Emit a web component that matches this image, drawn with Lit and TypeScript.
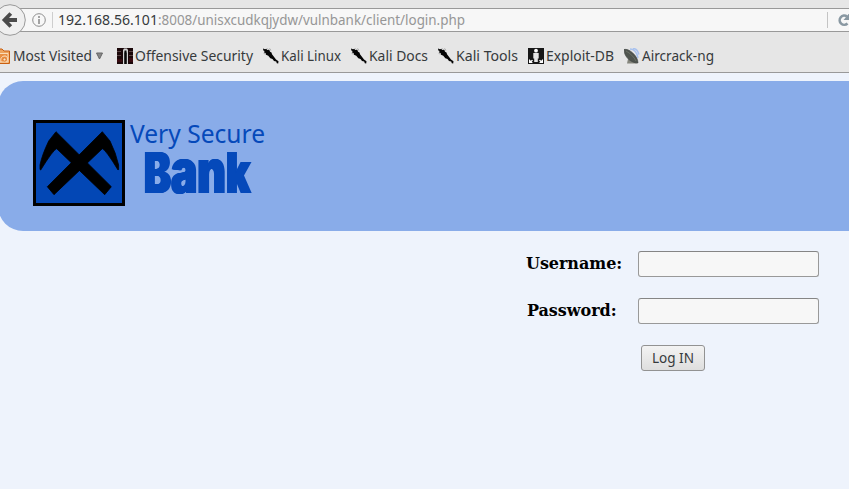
import { LitElement, html, svg, css } from "lit";
import { customElement } from "lit/decorators.js";

/* A single line of text fitted to an exact advance width. */
const label = (text: string, width: number, cls = "") => html`
  <svg class="label ${cls}" width=${width} height="24">
    <text x="0" y="17" textLength=${width} lengthAdjust="spacingAndGlyphs">${text}</text>
  </svg>`;

const dragon = svg`
  <path d="M0 .5l2 .8 1.500-.6.5 1.300L6.500 2l.5 1.800 1.500.7.5 1.800 2.300 3L13 11.500l2.500 1.800-.3 2.200-1.400-.3-.6-1.700-2.200-.5-1.500-2-2.200-.8-2-2.400L3 6.800 2.600 5 1 4.500 1.500 3 .3 2.500z" fill="#050505"/>
  <path d="M4 .6l3.500 2.200M6.500 .3l1.500 2M.5 5.200l2 1" stroke="#8a8a8a" stroke-width=".6" fill="none"/>`;

const icons: Record<string, unknown> = {
  feed: svg`
    <path d="M0 1h8l2 2h5.500v12.500H0z" fill="#eda45e" stroke="#ca5f10"/>
    <path d="M4 5.500h10v8.500H4z" fill="#e98f42" stroke="#fbe3c4" stroke-width=".9"/>
    <path d="M7 14c-1-4 1-6 4-6s3 4 1.500 6" stroke="#fbe3c4" fill="none"/>
    <circle cx="10.500" cy="11.500" r="1.500" fill="#fbe3c4" stroke="#d96c1b" stroke-width=".7"/>`,
  offsec: svg`
    <path d="M0 0h16v16H0z" fill="#1b080a"/>
    <path d="M0 3.500h4M0 7.500h4M12 3.500h4M12 7.500h4" stroke="#5a4446"/>
    <path d="M0 11h5v3H0zM12 10h4v4h-4z" fill="#380b11"/>
    <path d="M6 2L7 .500h3L11 2V16H6z" fill="#d5d5d5"/>
    <path d="M7.600 2.500h1.800l.4 3v10.500H7.200V5z" fill="#080808"/>`,
  dragon,
  exploit: svg`
    <path d="M0 0h16v16H0z" fill="#171717"/>
    <circle cx="8" cy="2.700" r="1.900" fill="#fff"/>
    <path d="M5.300 5h5.400v5.500H9.800V14H6.200v-3.500h-.9z" fill="#e7e7e7"/>
    <path d="M1 11v4h4l-1.300-1.300L5 12.500l-1-.7-1.200 1zM15 11v4h-4l1.300-1.300L11 12.500l1-.7 1.200 1z" fill="#fff"/>`,
  dish: svg`
    <path d="M6 1c5 0 7 4 8 9M9 .5c4 0 5 3 6 6" fill="none" stroke="#a9c2ee" stroke-width="1.500"/>
    <path d="M4 11l-1 4.500h10L11 12z" fill="#85867d"/>
    <path d="M0 1.500C5 0 14 8 14 15 7 15 0 9 0 1.500z" fill="#50554f" stroke="#3a403e" stroke-width=".6"/>
    <path d="M2 3c4 2 8 6 10 10" stroke="#6c7167" fill="none"/>`,
};

interface Bookmark { name: string; icon: string; width: number; cls: string; menu?: boolean }

const bookmarks: Bookmark[] = [
  { name: "Most Visited", icon: "feed", width: 79, cls: "wide", menu: true },
  { name: "Offensive Security", icon: "offsec", width: 118, cls: "" },
  { name: "Kali Linux", icon: "dragon", width: 60, cls: "" },
  { name: "Kali Docs", icon: "dragon", width: 59, cls: "" },
  { name: "Kali Tools", icon: "dragon", width: 62, cls: "" },
  { name: "Exploit-DB", icon: "exploit", width: 68, cls: "" },
  { name: "Aircrack-ng", icon: "dish", width: 72, cls: "" },
];

@customElement("browser-chrome")
export class BrowserChrome extends LitElement {
  static styles = css`
    :host { display: block; height: 73px; box-sizing: border-box; background: #e6e6e6;
      border-bottom: 1px solid #999; overflow: hidden; }
    svg { display: block; flex: none; }
    .label { overflow: visible; font: 14.500px "Noto Sans", sans-serif; fill: #363a3c; }
    .nav { display: flex; align-items: center; height: 40px; }
    .back { margin-left: -8px; z-index: 1; }
    .field { flex: 1; display: flex; align-items: center; height: 24px; box-sizing: border-box;
      margin-left: -10px; padding-left: 16px; background: #f7f7f7;
      border: solid #999; border-width: 1px 0; }
    .sep { width: 1px; height: 16px; background: #cecece; margin: 0 5px 0 5px; }
    .field .path { fill: #969696; }
    .reload { margin-left: auto; padding-left: 9px; border-left: 1px solid #c4c4c4; margin-right: -6px; }
    .bookmarks { display: flex; align-items: center; height: 32px; margin-left: -6px; }
    .mark { display: flex; align-items: center; gap: 2px; margin-right: 10px; }
    .wide { gap: 3px; margin-right: 13px; }
  `;
  render() {
    return html`
      <div class="nav">
        <svg class="back" width="34" height="34" viewBox="0 0 34 34">
          <circle cx="18" cy="17" r="15.300" fill="#efefef" stroke="#999"/>
          <path d="M25 17H13M18.800 10.500L12.500 17l6.300 6.500" fill="none" stroke="#4b4b4b" stroke-width="3.800"/>
        </svg>
        <div class="field">
          <svg width="15" height="16" viewBox="0 0 15 16">
            <circle cx="7" cy="8" r="6.300" fill="none" stroke="#8e8e8e"/>
            <path d="M7 4v2M7 7v5" stroke="#8e8e8e" stroke-width="1.600"/>
          </svg>
          <span class="sep"></span>
          ${label("192.168.56.101", 100)}
          ${label(":8008/unisxcudkqjydw/vulnbank/client/login.php", 307, "path")}
          <svg class="reload" width="18" height="16" viewBox="0 0 18 16">
            <path d="M10.500 11.500A4.600 4.600 0 1 1 10 4.500" fill="none" stroke="#8998a2" stroke-width="2.600"/>
            <path d="M12.500 1v7H6.500z" fill="#8998a2"/>
          </svg>
        </div>
      </div>
      <div class="bookmarks">
        ${bookmarks.map((b) => html`
          <div class="mark ${b.cls}">
            <svg width="16" height="16" viewBox="0 0 16 16">${icons[b.icon]}</svg>
            ${label(b.name, b.width)}
            ${b.menu ? html`<svg width="9" height="8" viewBox="0 0 9 8">
              <path d="M1.500 1h6l-3 6z" fill="#888" stroke="#666"/></svg>` : ""}
          </div>`)}
      </div>`;
  }
}

@customElement("bank-header")
export class BankHeader extends LitElement {
  static styles = css`
    :host { display: block; height: 150px; box-sizing: border-box; margin: 8px 0 0 -2px;
      padding: 38px 0 0 35px; background: #89ace9; border-radius: 25px 0 0 25px; }
    svg { display: block; overflow: visible; }
    .very { font: 24.500px "Noto Sans", sans-serif; fill: #0549ba; }
    .bank { font: 900 56px Inter, sans-serif; fill: #0549ba;
      filter: drop-shadow(1px 0 0 #0549ba) drop-shadow(-1px 0 0 #0549ba); }
    .low { font-size: 61px; }
  `;
  render() {
    return html`
      <svg width="234" height="88" viewBox="0 0 234 88">
        <rect x="1.500" y="2.500" width="89" height="83" fill="#0347b5" stroke="#000" stroke-width="3"/>
        <g stroke="#000" stroke-width=".8">
          <path d="M23 12.700L78.300 67.700 71.700 75.700 23.700 29.700Q20 31 7.700 51L7 50.500V46Q9 36 15.700 22z"/>
          <path d="M69.300 12.700L14.300 67.700 21 75.700 69.300 29.700Q73 31 85 51L85.600 50.500V46Q83 34 77 22z"/>
        </g>
        <text class="very" x="97" y="24" textLength="135" lengthAdjust="spacingAndGlyphs">Very Secure</text>
        <text class="bank" x="111" y="74" textLength="106.500" lengthAdjust="spacingAndGlyphs">B<tspan class="low">an</tspan>k</text>
      </svg>`;
  }
}

@customElement("login-form")
export class LoginForm extends LitElement {
  static styles = css`
    :host { display: grid; grid-template-columns: 112px 181px; row-gap: 21px; justify-content: end;
      padding: 20px 30px 0 0; align-items: center; }
    label { font: bold 16px/26px "DejaVu Serif", serif; color: #000; white-space: nowrap; letter-spacing: -0.05px; }
    .pass { padding-left: 1px; }
    input { box-sizing: border-box; width: 181px; height: 26px; margin: 0; background: #f7f7f7;
      border: 1px solid #999; border-top-color: #858585; border-radius: 3px; outline: none; }
    button { grid-column: 2; justify-self: start; box-sizing: border-box; width: 64px; height: 26px;
      margin-left: 3px; padding: 0 0 0 10px; border: 1px solid #929292; border-radius: 3px;
      background: linear-gradient(#f3f3f3, #dedede); display: flex; align-items: center; }
    .label { display: block; overflow: visible; font: 14.500px "Noto Sans", sans-serif; fill: #363a3c; }
  `;
  render() {
    return html`
      <label for="user">Username:</label><input id="user" type="text">
      <label class="pass" for="pass">Password:</label><input id="pass" type="password">
      <button type="submit">${label("Log IN", 42)}</button>`;
  }
}

@customElement("app-root")
export class AppRoot extends LitElement {
  static styles = css`
    :host { display: block; height: 100vh; overflow: hidden; background: #eef3fc; }
  `;
  render() {
    return html`<browser-chrome></browser-chrome><bank-header></bank-header><login-form></login-form>`;
  }
}
